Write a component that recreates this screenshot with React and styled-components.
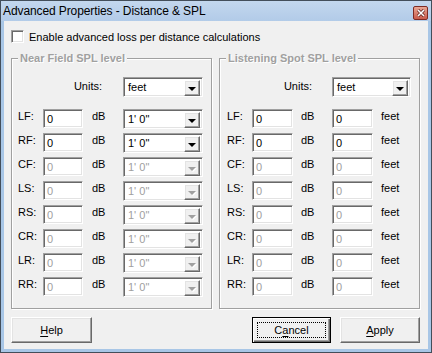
import styled, { createGlobalStyle, css } from "styled-components";

const GlobalStyle = createGlobalStyle`
  html, body {
    margin: 0;
    padding: 0;
    background: #ffffff;
  }
  * {
    box-sizing: border-box;
  }
`;

const sunken = css`
  border: 1px solid;
  border-color: #a0a0a0 #ffffff #ffffff #a0a0a0;
  box-shadow: inset 1px 1px 0 #696969, inset -1px -1px 0 #e3e3e3;
`;

const raised = css`
  border: 1px solid;
  border-color: #ffffff #696969 #696969 #ffffff;
  box-shadow: inset -1px -1px 0 #a0a0a0, inset 1px 1px 0 #e3e3e3;
`;

const Window = styled.div`
  width: 432px;
  height: 353px;
  display: flex;
  flex-direction: column;
  border: 1px solid #434e5a;
  background: #a8c6e6;
  font-family: "Liberation Sans", Arial, sans-serif;
  font-size: 11px;
  color: #000;
`;

const TitleBar = styled.div`
  height: 20px;
  display: flex;
  align-items: center;
  justify-content: space-between;
  padding: 0 3px 1px 2px;
  background: linear-gradient(#c3d7ee, #b2cbe8);
`;

const Title = styled.span`
  font-size: 12px;
  color: #000;
  letter-spacing: -0.1px;
`;

const CloseButton = styled.div`
  width: 15px;
  height: 14px;
  margin-top: 4px;
  border: 1px solid #7d2b24;
  border-radius: 2px;
  background: linear-gradient(#e9a795, #c95b4b);
  display: flex;
  align-items: center;
  justify-content: center;
`;

const Client = styled.div`
  flex: 1;
  margin: 0 3px 3px 3px;
  background: #f0f0f0;
  padding: 9px 8px 6px 7px;
  display: flex;
  flex-direction: column;
`;

const CheckRow = styled.label`
  display: flex;
  align-items: center;
  height: 13px;
  gap: 5px;
`;

const CheckBox = styled.span`
  width: 13px;
  height: 13px;
  background: #fff;
  ${sunken};
`;

const Groups = styled.div`
  display: flex;
  gap: 7px;
  margin-top: 15px;
  height: 251px;
`;

const GroupBox = styled.div`
  position: relative;
  width: 201px;
  height: 251px;
  border: 1px solid #a0a0a0;
  box-shadow: inset 1px 1px 0 #ffffff, 1px 1px 0 #ffffff;
  padding: 18px 0 0 ${(p) => p.$pad}px;
`;

const GroupTitle = styled.span`
  position: absolute;
  top: -7px;
  left: 6px;
  padding: 0 2px;
  background: #f0f0f0;
  font-weight: bold;
  line-height: 13px;
  color: #a0a0a0;
  text-shadow: 1px 1px 0 #ffffff;
`;

const Grid = styled.div`
  display: grid;
  grid-template-columns: 25px 49px 31px 1fr;
  grid-auto-rows: 20px;
  row-gap: 4px;
`;

const UnitsRow = styled(Grid)`
  margin-bottom: 12px;
`;

const UnitsLabel = styled.span`
  grid-column: 1 / 4;
  text-align: right;
  padding-right: ${(p) => p.$gap}px;
  padding-top: 3px;
`;

const Label = styled.span`
  padding-top: 1px;
  color: #000;
`;

const Edit = styled.div`
  width: ${(p) => p.$w}px;
  height: 19px;
  background: #ffffff;
  ${sunken};
  padding: 3px 0 0 3px;
  line-height: 13px;
  color: ${(p) => (p.$disabled ? "#a0a0a0" : "#000")};
`;

const EditCell = styled.div`
  display: flex;
  align-items: flex-start;
  gap: 8px;
`;

const Combo = styled.div`
  width: ${(p) => p.$w}px;
  height: 20px;
  background: #ffffff;
  ${sunken};
  display: flex;
  padding: 2px;
`;

const ComboText = styled.span`
  flex: 1;
  padding: 1px 0 0 2px;
  line-height: 13px;
  color: ${(p) => (p.$disabled ? "#a0a0a0" : "#000")};
`;

const ArrowButton = styled.span`
  width: 16px;
  height: 16px;
  background: #f0f0f0;
  ${raised};
  display: flex;
  align-items: center;
  justify-content: center;
`;

const Arrow = styled.span`
  width: 0;
  height: 0;
  margin-top: 1px;
  border-left: 4px solid transparent;
  border-right: 4px solid transparent;
  border-top: 4px solid ${(p) => (p.$disabled ? "#a0a0a0" : "#000")};
  filter: ${(p) => (p.$disabled ? "drop-shadow(1px 1px 0 #fff)" : "none")};
`;

const ButtonRow = styled.div`
  display: flex;
  margin-top: 8px;
  gap: 9px;
`;

const Spacer = styled.div`
  flex: 1;
`;

const Button = styled.div`
  position: relative;
  width: ${(p) => p.$w}px;
  height: 26px;
  background: #f0f0f0;
  display: flex;
  align-items: center;
  justify-content: center;
  padding-bottom: 1px;
  ${(p) =>
    p.$default
      ? css`
          border: 1px solid #000;
          box-shadow: inset 1px 1px 0 #fff, inset -1px -1px 0 #696969,
            inset -2px -2px 0 #a0a0a0;
          &::after {
            content: "";
            position: absolute;
            inset: 4px;
            border: 1px dotted #000;
          }
        `
      : raised};

  u {
    text-decoration-thickness: 1px;
    text-underline-offset: 2px;
  }
`;

const channels = ["LF", "RF", "CF", "LS", "RS", "CR", "LR", "RR"];

function DropDown({ w, value, disabled }) {
  return (
    <Combo $w={w}>
      <ComboText $disabled={disabled}>{value}</ComboText>
      <ArrowButton>
        <Arrow $disabled={disabled} />
      </ArrowButton>
    </Combo>
  );
}

function NearField() {
  return (
    <GroupBox $pad={6}>
      <GroupTitle>Near Field SPL level</GroupTitle>
      <UnitsRow>
        <UnitsLabel $gap={21}>Units:</UnitsLabel>
        <DropDown w={80} value="feet" />
      </UnitsRow>
      <Grid>
        {channels.map((ch, i) => {
          const off = i > 1;
          return [
            <Label key={ch + "l"}>{ch}:</Label>,
            <Edit key={ch + "e"} $w={40} $disabled={off}>0</Edit>,
            <Label key={ch + "d"}>dB</Label>,
            <DropDown key={ch + "c"} w={80} value={`1' 0"`} disabled={off} />,
          ];
        })}
      </Grid>
    </GroupBox>
  );
}

function ListeningSpot() {
  return (
    <GroupBox $pad={7}>
      <GroupTitle>Listening Spot SPL level</GroupTitle>
      <UnitsRow>
        <UnitsLabel $gap={20}>Units:</UnitsLabel>
        <DropDown w={79} value="feet" />
      </UnitsRow>
      <Grid>
        {channels.map((ch, i) => {
          const off = i > 1;
          return [
            <Label key={ch + "l"}>{ch}:</Label>,
            <Edit key={ch + "e"} $w={41} $disabled={off}>0</Edit>,
            <Label key={ch + "d"}>dB</Label>,
            <EditCell key={ch + "f"}>
              <Edit $w={41} $disabled={off}>0</Edit>
              <Label>feet</Label>
            </EditCell>,
          ];
        })}
      </Grid>
    </GroupBox>
  );
}

export default function App() {
  return (
    <>
      <GlobalStyle />
      <Window>
        <TitleBar>
          <Title>Advanced Properties - Distance &amp; SPL</Title>
          <CloseButton>
            <svg width="8" height="8" viewBox="0 0 8 8">
              <path d="M1 1 L7 7 M7 1 L1 7" stroke="#5a1d18" strokeWidth="3" />
              <path d="M1 1 L7 7 M7 1 L1 7" stroke="#fff" strokeWidth="1.6" />
            </svg>
          </CloseButton>
        </TitleBar>
        <Client>
          <CheckRow>
            <CheckBox />
            Enable advanced loss per distance calculations
          </CheckRow>
          <Groups>
            <NearField />
            <ListeningSpot />
          </Groups>
          <ButtonRow>
            <Button $w={81}>
              <span><u>H</u>elp</span>
            </Button>
            <Spacer />
            <Button $w={79} $default>
              <span>C<u>a</u>ncel</span>
            </Button>
            <Button $w={80}>
              <span><u>A</u>pply</span>
            </Button>
          </ButtonRow>
        </Client>
      </Window>
    </>
  );
}
